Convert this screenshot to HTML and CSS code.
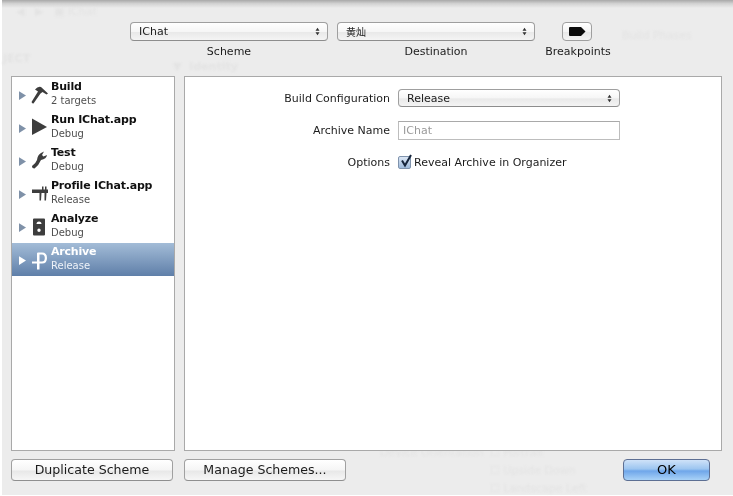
FILE: index.html
```html
<!DOCTYPE html>
<html lang="en">
<head>
<meta charset="utf-8">
<title>Scheme Editor</title>
<link rel="stylesheet" href="styles.css">
</head>
<body>
<div class="sheet">
  <div class="ghosts" aria-hidden="true">
    <span class="ghost g-back">◀ &nbsp; ▶ &nbsp; ▣ IChat</span>
    <span class="ghost g-project">JECT</span>
    <span class="ghost g-identity">▼ &nbsp;Identity</span>
    <span class="ghost g-phases">Build Phases</span>
    <span class="ghost g-orient">Device Orientation</span>
    <span class="ghost g-o1">☐ Portrait</span>
    <span class="ghost g-o2">☐ Upside Down</span>
    <span class="ghost g-o3">☐ Landscape Left</span>
  </div>

  <header class="toolbar">
    <div class="tool">
      <div class="select scheme"><span>IChat</span><svg class="updown" viewBox="0 0 6 10"><path d="M3 0.500 5.400 4H.6zM3 9.500 .6 6h4.800z"/></svg></div>
      <div class="tool-label">Scheme</div>
    </div>
    <div class="tool">
      <div class="select scheme"><span class="cjk">黄灿</span><svg class="updown" viewBox="0 0 6 10"><path d="M3 0.500 5.400 4H.6zM3 9.500 .6 6h4.800z"/></svg></div>
      <div class="tool-label">Destination</div>
    </div>
    <div class="tool tool-bp">
      <div class="bp-btn"><svg class="bp-icon" viewBox="0 0 17 9"><path d="M1 0H12L16.500 4.500 12 9H1Q0 9 0 8V1Q0 0 1 0Z"/></svg></div>
      <div class="tool-label bp-label">Breakpoints</div>
    </div>
  </header>

  <main class="panels">
    <nav class="list">
      <div class="row">
        <svg class="tri" viewBox="0 0 8 10"><path d="M0 0 8 5 0 10Z"/></svg>
        <svg class="ico" viewBox="0 0 22 22"><path d="M3.500 18 10 7.500 7 5.500Q10 2 13 3L20 9.500 18.500 10.500 14.500 8 12.500 9.500 5.500 19.500Q4 19.500 3.500 18Z"/></svg>
        <div class="txt"><b>Build</b><small>2 targets</small></div>
      </div>
      <div class="row">
        <svg class="tri" viewBox="0 0 8 10"><path d="M0 0 8 5 0 10Z"/></svg>
        <svg class="ico" viewBox="0 0 22 22"><path d="M4 1.500 19 10 4 18Z"/></svg>
        <div class="txt"><b>Run IChat.app</b><small>Debug</small></div>
      </div>
      <div class="row">
        <svg class="tri" viewBox="0 0 8 10"><path d="M0 0 8 5 0 10Z"/></svg>
        <svg class="ico" viewBox="0 0 22 22"><path d="M6.500 18.500Q4 18.500 4 16Q8 13 9 10Q9.500 5 13 3L16 1.500 14 5 15.500 6.500 19 5Q18.500 9 13 10Q11 15 6.500 18.500Z"/></svg>
        <div class="txt"><b>Test</b><small>Debug</small></div>
      </div>
      <div class="row">
        <svg class="tri" viewBox="0 0 8 10"><path d="M0 0 8 5 0 10Z"/></svg>
        <svg class="ico" viewBox="0 0 22 22"><path d="M4 6.500H14V3.500H15.500V6.500H17V3.500H18.500V6.500H20V10H18.500L18 17.500H16.500V10H13.500L13 17.500H11.500V10H4Z"/></svg>
        <div class="txt"><b>Profile IChat.app</b><small>Release</small></div>
      </div>
      <div class="row">
        <svg class="tri" viewBox="0 0 8 10"><path d="M0 0 8 5 0 10Z"/></svg>
        <svg class="ico" viewBox="0 0 22 22"><path fill-rule="evenodd" d="M6 2.500H16Q17 2.500 17 3.500V18.500Q17 19.500 16 19.500H6Q5 19.500 5 18.500V3.500Q5 2.500 6 2.500ZM11 5.500A2.500 2.500 0 0 0 8.500 8H13.500A2.500 2.500 0 0 0 11 5.500ZM11 12.500A1.700 1.700 0 1 0 11 15.900 1.700 1.700 0 0 0 11 12.500Z"/></svg>
        <div class="txt"><b>Analyze</b><small>Debug</small></div>
      </div>
      <div class="row selected">
        <svg class="tri" viewBox="0 0 8 10"><path d="M0 0 8 5 0 10Z"/></svg>
        <svg class="ico" viewBox="0 0 22 22"><path fill-rule="evenodd" d="M10 3.500H14Q19 3.500 19 9T14 14.500H11.500V20.500H9V14.500H4V12.500H9V4.500Q9 3.500 10 3.500ZM11.500 5.500V12.500H14Q16.800 12.500 16.800 9T14 5.500Z"/></svg>
        <div class="txt"><b>Archive</b><small>Release</small></div>
      </div>
    </nav>

    <section class="detail">
      <div class="form">
        <label class="f-label">Build Configuration</label>
        <div class="select config"><span>Release</span><svg class="updown" viewBox="0 0 6 10"><path d="M3 0.500 5.400 4H.6zM3 9.500 .6 6h4.800z"/></svg></div>
        <label class="f-label">Archive Name</label>
        <div class="input">IChat</div>
        <label class="f-label">Options</label>
        <div class="check-line">
          <span class="check"><svg class="tick" viewBox="0 0 14 14"><path d="M3 6.500 6 11.500 12 1"/></svg></span>
          <span>Reveal Archive in Organizer</span>
        </div>
      </div>
    </section>
  </main>

  <footer class="actions">
    <div class="btn b-dup">Duplicate Scheme</div>
    <div class="btn b-man">Manage Schemes...</div>
    <div class="btn b-ok">OK</div>
  </footer>
</div>
</body>
</html>
```
FILE: styles.css
```css
* { box-sizing: border-box; }
html, body { margin: 0; padding: 0; height: 100%; background: #fff; overflow: hidden; }
body { font-family: "DejaVu Sans", sans-serif; font-size: 11px; color: #1c1c1c; }

.sheet {
  position: relative;
  width: 731px;
  height: 495px;
  margin-left: 2px;
  padding: 22px 10px 0 9px;
  background: #ececec;
  display: flex;
  flex-direction: column;
  filter: blur(0.55px);
}
.sheet::before {
  content: "";
  position: absolute;
  left: 0; right: 0; top: 0;
  height: 8px;
  background: linear-gradient(#a8a8a8, #d2d2d2 45%, #ececec);
}

.ghosts { position: absolute; inset: 0; filter: blur(1.3px); color: #e3e3e3; font-size: 11px; }
.ghost { position: absolute; white-space: nowrap; }
.g-back { left: 14px; top: 5px; }
.g-project { left: 1px; top: 52px; font-weight: 700; }
.g-identity { left: 171px; top: 60px; font-weight: 700; }
.g-phases { left: 620px; top: 29px; }
.g-orient { left: 378px; top: 446px; }
.g-o1 { left: 488px; top: 446px; }
.g-o2 { left: 488px; top: 464px; }
.g-o3 { left: 488px; top: 482px; }

.toolbar {
  position: relative;
  display: flex;
  padding-left: 119px;
  height: 54px;
  flex: none;
}
.tool { width: 198px; margin-right: 9px; display: flex; flex-direction: column; align-items: center; }
.tool-bp { width: 30px; margin-left: 18px; margin-right: 0; }
.tool-label { margin-top: 3px; line-height: 16px; white-space: nowrap; font-size: 11px; }
.bp-label { margin-left: 2px; }

.select {
  display: flex;
  align-items: center;
  justify-content: space-between;
  width: 100%;
  height: 19px;
  padding: 0 7px 0 8px;
  border: 1px solid #9f9f9f;
  border-bottom-color: #8d8d8d;
  border-radius: 4px;
  background: linear-gradient(#fff, #f6f6f6 50%, #e9e9e9 55%, #f4f4f4);
  font-size: 11px;
}
.cjk { font-family: "Noto Sans CJK SC", sans-serif; font-size: 10px; }
.updown { width: 5px; height: 9px; fill: #333; }

.bp-btn {
  width: 30px;
  height: 19px;
  flex: none;
  display: flex;
  align-items: center;
  justify-content: center;
  border: 1px solid #9f9f9f;
  border-radius: 4px;
  background: linear-gradient(#fff, #f4f4f4 50%, #e9e9e9 55%, #f4f4f4);
}
.bp-icon { width: 17px; height: 9px; fill: #0c0c0c; }

.panels { position: relative; display: flex; gap: 9px; height: 375px; flex: none; }

.list {
  width: 164px;
  background: #fff;
  border: 1px solid #a9a9a9;
  padding-top: 1px;
}
.row {
  height: 33px;
  display: flex;
  align-items: center;
  padding-left: 7px;
}
.tri { width: 7px; height: 9px; fill: #7f91a8; flex: none; margin-top: 1px; }
.ico { width: 22px; height: 22px; flex: none; margin-left: 2px; fill: #3d3d3d; }
.txt { margin-left: 1px; display: flex; flex-direction: column; line-height: 14px; margin-top: -3px; }
.txt b { font-size: 11px; color: #111; white-space: nowrap; letter-spacing: -0.2px; }
.txt small { font-size: 10px; color: #4f4f4f; line-height: 13px; }
.selected { background: linear-gradient(#a3bcd7, #5f7fa9); }
.selected .tri { fill: #fff; }
.selected .ico { fill: #fff; }
.selected b, .selected small { color: #fff; }
.selected small { color: #eef2f8; }

.detail {
  width: 538px;
  background: #fff;
  border: 1px solid #a9a9a9;
}
.form {
  display: grid;
  grid-template-columns: 205px 222px;
  column-gap: 8px;
  row-gap: 14px;
  align-items: center;
  padding-top: 12px;
  grid-auto-rows: 18px;
}
.f-label { text-align: right; white-space: nowrap; font-size: 11px; }
.config { height: 18px; }
.input {
  height: 19px;
  line-height: 17px;
  border: 1px solid #bdbdbd;
  border-top-color: #a9a9a9;
  padding-left: 4px;
  color: #9a9a9a;
  width: 222px;
  background: #fff;
}
.check-line { display: flex; align-items: center; gap: 3px; white-space: nowrap; font-size: 11px; }
.check {
  position: relative;
  width: 13px;
  height: 13px;
  border: 1px solid #7f93ad;
  border-radius: 2px;
  background: linear-gradient(#dbe6f4, #9fbbdc);
  flex: none;
}
.tick {
  position: absolute;
  left: 0; top: -3px;
  width: 14px; height: 14px;
  fill: none;
  stroke: #16253c;
  stroke-width: 2;
}

.actions { position: relative; display: flex; margin-top: 8px; flex: none; }
.btn {
  height: 22px;
  line-height: 20px;
  text-align: center;
  font-size: 12.600px;
  border: 1px solid #a0a0a0;
  border-bottom-color: #8f8f8f;
  border-radius: 4px;
  background: linear-gradient(#fff, #f5f5f5 50%, #e8e8e8 55%, #f6f6f6);
  white-space: nowrap;
}
.b-dup { width: 162px; }
.b-man { width: 162px; margin-left: 11px; }
.b-ok {
  width: 87px;
  margin-left: auto;
  margin-right: 13px;
  border-color: #5d6f93;
  background: linear-gradient(#cfe2f8, #9cc5f0 45%, #6fa6ea 55%, #a9d2f7);
  color: #000;
  font-size: 13px;
}
```
